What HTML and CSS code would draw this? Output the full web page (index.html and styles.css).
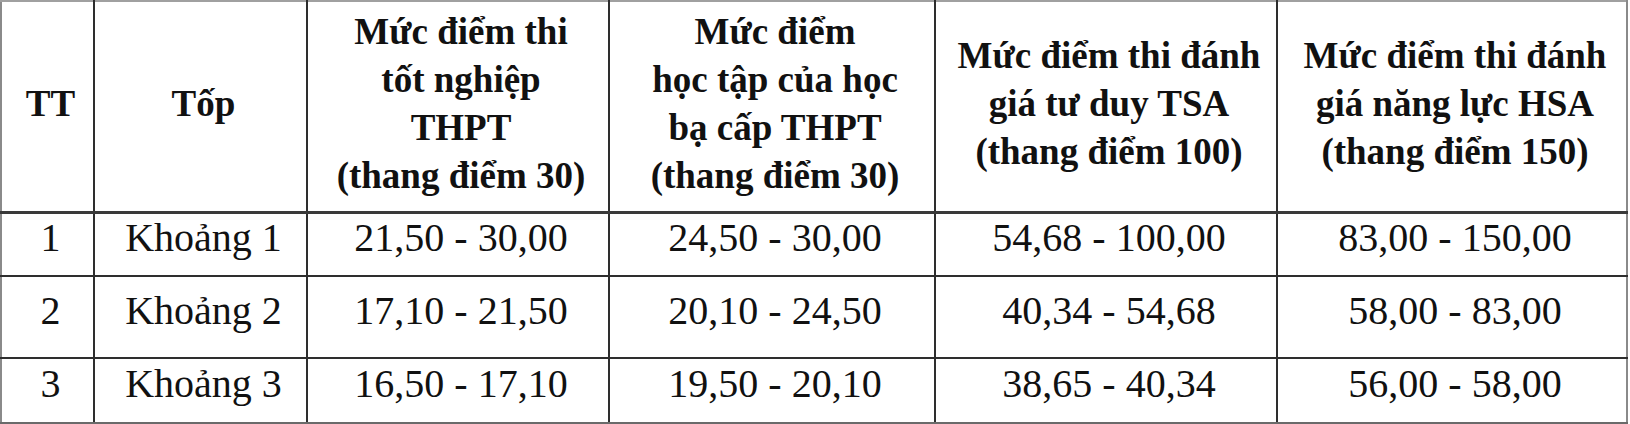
FILE: index.html
```html
<!DOCTYPE html>
<html lang="vi">
<head>
<meta charset="utf-8">
<title>Bảng điểm</title>
<link rel="stylesheet" href="styles.css">
</head>
<body>
<table class="score-table">
  <colgroup>
    <col class="c-tt">
    <col class="c-top">
    <col class="c-thpt">
    <col class="c-hocba">
    <col class="c-tsa">
    <col class="c-hsa">
  </colgroup>
  <thead>
    <tr class="head-row">
      <th>TT</th>
      <th>Tốp</th>
      <th>Mức điểm thi<br>tốt nghiệp<br>THPT<br>(thang điểm 30)</th>
      <th>Mức điểm<br>học tập của học<br>bạ cấp THPT<br>(thang điểm 30)</th>
      <th>Mức điểm thi đánh<br>giá tư duy TSA<br>(thang điểm 100)</th>
      <th>Mức điểm thi đánh<br>giá năng lực HSA<br>(thang điểm 150)</th>
    </tr>
  </thead>
  <tbody>
    <tr class="row-1">
      <td>1</td>
      <td>Khoảng 1</td>
      <td>21,50 - 30,00</td>
      <td>24,50 - 30,00</td>
      <td>54,68 - 100,00</td>
      <td>83,00 - 150,00</td>
    </tr>
    <tr class="row-2">
      <td>2</td>
      <td>Khoảng 2</td>
      <td>17,10 - 21,50</td>
      <td>20,10 - 24,50</td>
      <td>40,34 - 54,68</td>
      <td>58,00 - 83,00</td>
    </tr>
    <tr class="row-3">
      <td>3</td>
      <td>Khoảng 3</td>
      <td>16,50 - 17,10</td>
      <td>19,50 - 20,10</td>
      <td>38,65 - 40,34</td>
      <td>56,00 - 58,00</td>
    </tr>
  </tbody>
</table>
</body>
</html>
```

FILE: styles.css
```css
html, body {
  margin: 0;
  padding: 0;
  background: #ffffff;
}

.score-table {
  border-collapse: collapse;
  table-layout: fixed;
  width: 1626px;
  font-family: "Liberation Serif", "Times New Roman", serif;
  color: #111111;
}

.c-tt { width: 93px; }
.c-top { width: 213px; }
.c-thpt { width: 302px; }
.c-hocba { width: 326px; }
.c-tsa { width: 342px; }
.c-hsa { width: 350px; }

.score-table th,
.score-table td {
  border: 2px solid #2e2e2e;
  text-align: center;
  vertical-align: middle;
  padding: 0 0 0 6px;
}

.score-table th {
  font-size: 37px;
  font-weight: bold;
  line-height: 48px;
  padding-bottom: 4px;
  border-bottom: 3px solid #3a3a3a;
}

.score-table td {
  font-size: 40px;
  font-weight: normal;
  line-height: 44px;
  padding-bottom: 13px;
}

.score-table tr > :first-child {
  border-left-color: #8a8a8a;
}

.score-table tr > :last-child {
  border-right-color: #8a8a8a;
}

.head-row th {
  border-top-color: #a0a0a0;
}

.row-3 td {
  border-bottom-color: #6a6a6a;
}

.head-row { height: 211px; }
.row-1 { height: 64px; }
.row-2 { height: 82px; }
.row-3 { height: 65px; }
```
